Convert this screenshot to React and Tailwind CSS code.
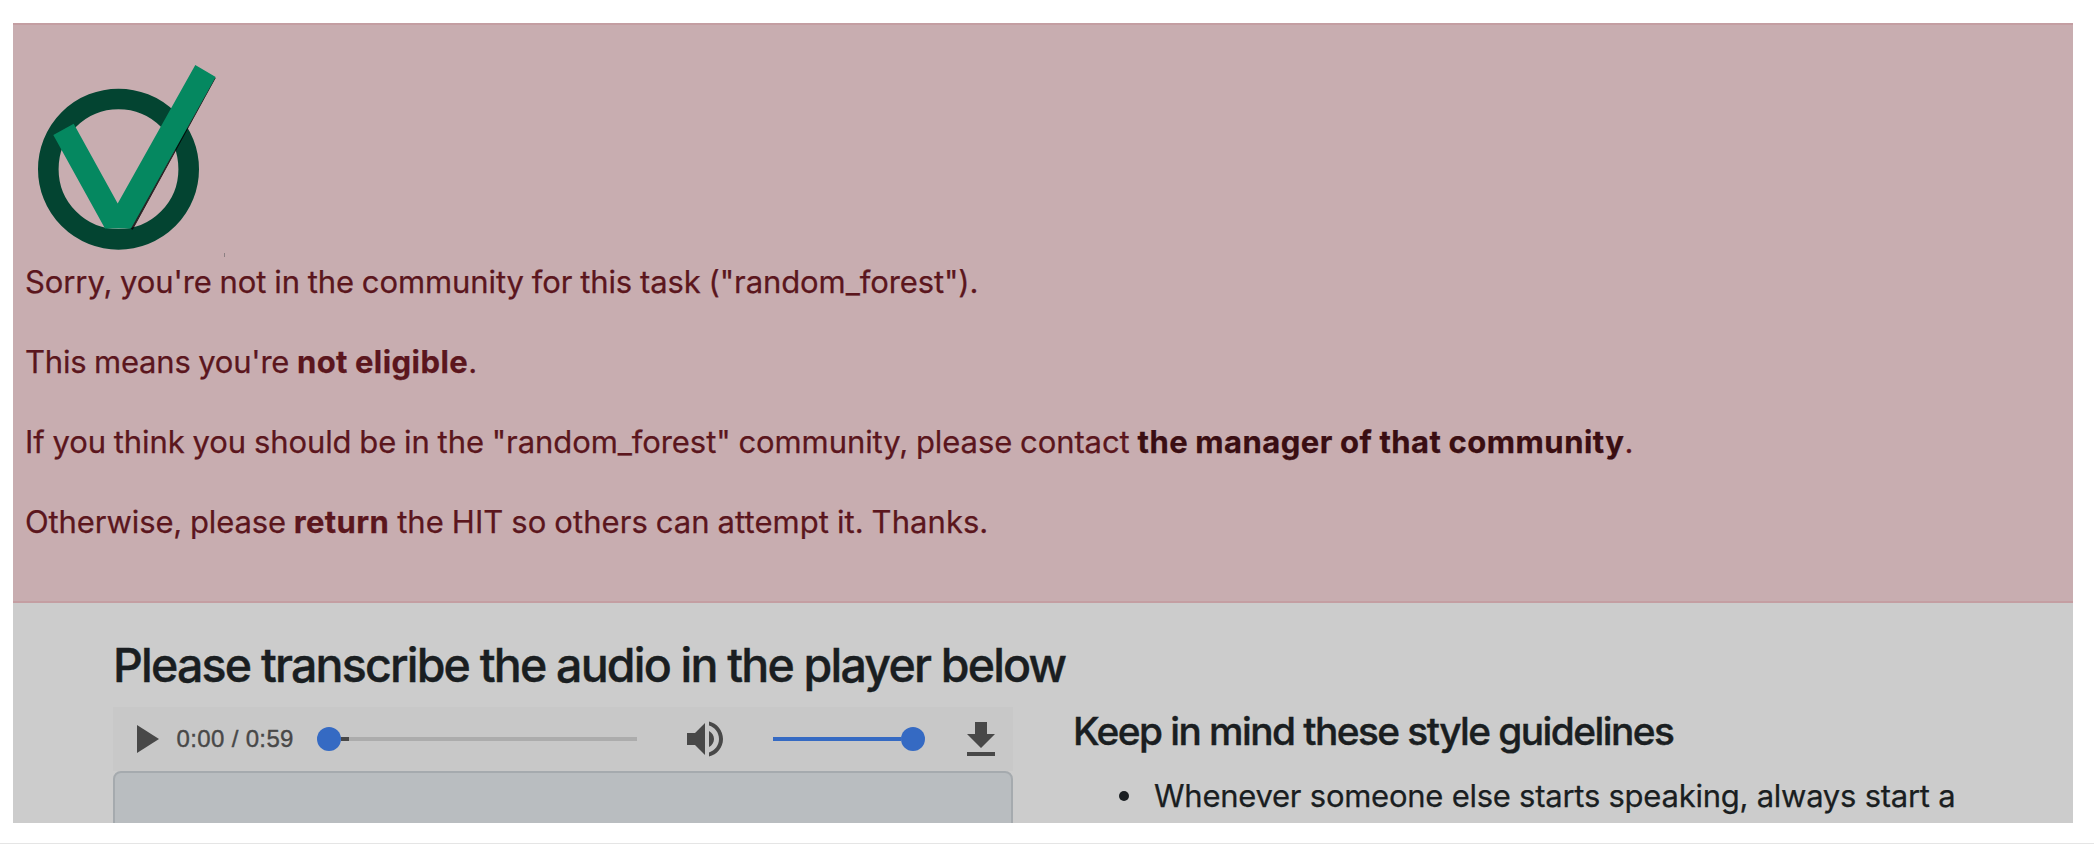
function Logo() {
  return (
    <svg className="block h-[200px] w-[200px]" viewBox="25 61 200 200" aria-label="Check mark logo">
      <defs>
        <filter id="soft" x="-10%" y="-10%" width="120%" height="120%">
          <feGaussianBlur stdDeviation="0.7" />
        </filter>
      </defs>
      <circle cx="118.5" cy="169.2" r="70.2" fill="none" stroke="#034431" strokeWidth="20.6" />
      <path d="M215.2 78L132.5 229.3L129 227L213.5 77Z" fill="#000" opacity="0.8" stroke="#000" strokeWidth="1" filter="url(#soft)" />
      <path d="M53.3 135L73.7 123.7L117.7 203.5L195.3 65L215.7 77L131 228.5H105Z" fill="#058860" />
      <path d="M224.5 253V257" stroke="#8d8083" strokeWidth="1" />
    </svg>
  );
}

function Icon({ d }) {
  return (
    <svg className="h-12 w-12 shrink-0" viewBox="0 0 24 24" fill="#484848">
      <path d={d} />
    </svg>
  );
}

function Player() {
  return (
    <div className="flex h-16 w-[900px] items-center bg-[#c8c8c8] pl-2">
      <Icon d="M8 5v14l11-7z" />
      <span className="ml-[7.5px] w-[139.5px] whitespace-nowrap font-['Liberation_Sans',sans-serif] text-[24px] tracking-[0.35px] text-[#484848] [-webkit-text-stroke:0.4px_#484848]">
        0:00 / 0:59
      </span>
      <div className="ml-[1px] flex w-[320px] items-center">
        <span className="h-6 w-6 rounded-full bg-[#356ac3]" />
        <span className="h-1 w-2 bg-[#484848]" />
        <span className="h-1 flex-1 bg-[#acacac]" />
      </div>
      <div className="ml-[44px] flex">
        <Icon d="M3 9v6h4l5 5V4L7 9H3zm13.5 3c0-1.77-1.02-3.29-2.5-4.03v8.05c1.48-.73 2.5-2.25 2.5-4.02zM14 3.23v2.06c2.89.86 5 3.54 5 6.71s-2.11 5.85-5 6.71v2.06c4.01-.91 7-4.49 7-8.77s-2.99-7.86-7-8.77z" />
      </div>
      <div className="ml-[44px] flex w-[152px] items-center">
        <span className="h-1 flex-1 bg-[#356ac3]" />
        <span className="h-6 w-6 rounded-full bg-[#356ac3]" />
      </div>
      <div className="ml-8 flex pt-[2px]">
        <Icon d="M19 9h-4V3H9v6H5l7 7 7-7zM5 18v2h14v-2H5z" />
      </div>
    </div>
  );
}

export default function App() {
  return (
    <div className="flex h-[844px] w-[2094px] flex-col overflow-hidden border-b border-[#e5e5e5] bg-white pl-[13px] pt-[23px] font-['Inter',sans-serif]">
      <div className="flex h-[800px] w-[2060px] flex-col overflow-hidden bg-[#cccccc]">
        <section className="h-[580px] shrink-0 border-y-2 border-[#c49ea2] bg-[#c8adb0] pl-3 pt-9 text-[31px] leading-10 text-[#5b161d]">
          <Logo />
          <div className="flex flex-col gap-10 whitespace-nowrap pt-[1px] [word-spacing:-0.8px] [-webkit-text-stroke:0.25px_currentColor]">
            <p className="tracking-[-0.09px]">Sorry, you're not in the community for this task ("random_forest").</p>
            <p className="tracking-[-0.22px]">This means you're <strong className="font-bold tracking-[0.45px]">not eligible</strong>.</p>
            <p className="tracking-[-0.08px]">
              If you think you should be in the "random_forest" community, please contact{' '}
              <strong className="font-bold tracking-[0.5px] text-[#3a0e12]">the manager of that community</strong>.
            </p>
            <p className="tracking-[-0.13px]">Otherwise, please <strong className="font-bold tracking-[0.4px]">return</strong><span className="tracking-[0.05px]"> the HIT so others can attempt it. Thanks.</span></p>
          </div>
        </section>
        <main className="flex flex-col pl-[100px] pt-[33px] text-[#1a1e21]">
          <h1 className="h-[71px] whitespace-nowrap text-[46.5px] font-medium leading-[58px] tracking-[-1.8px] [-webkit-text-stroke:0.4px_currentColor]">
            Please transcribe the audio in the player below
          </h1>
          <div className="flex items-start gap-[60px]">
            <div>
              <Player />
              <div className="h-40 w-[900px] rounded-lg border-2 border-[#a5aaae] bg-[#b9bdc0]" />
            </div>
            <div className="whitespace-nowrap">
              <h2 className="h-[69px] text-[38.8px] font-medium leading-[48px] tracking-[-1.55px] [-webkit-text-stroke:0.4px_currentColor]">
                Keep in mind these style guidelines
              </h2>
              <ul className="pl-[46px]">
                <li className="flex items-center text-[31px] leading-10 tracking-[-0.25px] [-webkit-text-stroke:0.25px_currentColor]">
                  <span className="mr-[25px] h-[10px] w-[10px] rounded-full bg-[#1a1e21]" />
                  <span>Whenever someone else starts speaking, always start a</span>
                </li>
              </ul>
            </div>
          </div>
        </main>
      </div>
    </div>
  );
}
